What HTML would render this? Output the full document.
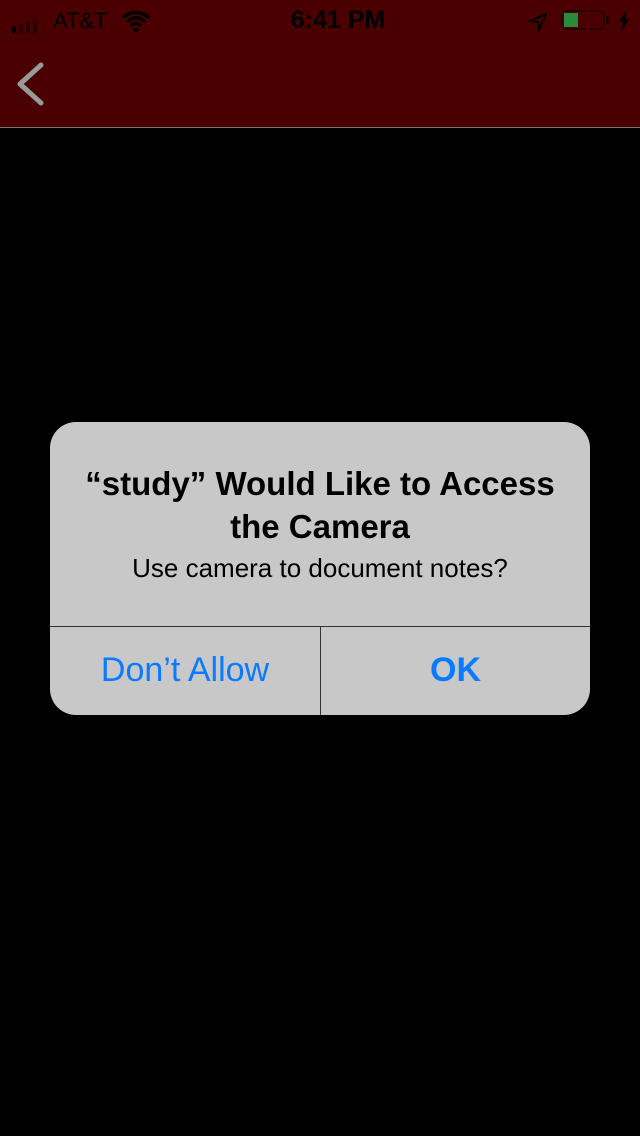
<!DOCTYPE html>
<html><head><style>
body{margin:0;width:640px;height:1136px;background:#000;position:relative;overflow:hidden;font-family:"Liberation Sans",sans-serif}
.nav{position:absolute;left:0;top:0;width:640px;height:127px;background:#4a0000;border-bottom:1px solid #777}
.st{position:absolute;top:8px;font-size:22px;color:#000}
.dlg{position:absolute;left:50px;top:422px;width:540px;height:293px;background:#c8c8c8;border-radius:26px;overflow:hidden}
.t{position:absolute;left:0;width:540px;text-align:center;color:#000}
.b{position:absolute;top:204px;height:89px;line-height:89px;text-align:center;color:#0a7aff;font-size:34px}
</style></head><body>
<div class="nav">
<div style="position:absolute;left:12px;top:22px">
<div style="position:absolute;left:0;top:4px;width:4px;height:7px;background:#000;border-radius:1px"></div>
<div style="position:absolute;left:7px;top:2px;width:4px;height:9px;background:#2a0000"></div>
<div style="position:absolute;left:14px;top:0;width:4px;height:11px;background:#2a0000" ></div>
<div style="position:absolute;left:21px;top:-3px;width:4px;height:14px;background:#2a0000"></div>
</div>
<div class="st" style="left:53px">AT&amp;T</div>
<svg style="position:absolute;left:121px;top:10px" width="30" height="22" viewBox="0 0 30 22"><path d="M2 8a18 18 0 0 1 26 0M6 12a12 12 0 0 1 18 0M10 16a6 6 0 0 1 10 0" stroke="#000" stroke-width="3.5" fill="none"/><circle cx="15" cy="20" r="2.5"/></svg>
<div class="st" style="left:277px;top:6px;font-size:25px;font-weight:bold;width:122px;text-align:center">6:41 PM</div>
<svg style="position:absolute;left:528px;top:12px" width="20" height="20" viewBox="0 0 20 20"><path d="M18 2L2 9l8 1 1 8z" fill="none" stroke="#000" stroke-width="2"/></svg>
<div style="position:absolute;left:561px;top:10px;width:44px;height:20px;border:2px solid #2a0000;border-radius:5px;box-sizing:border-box"></div>
<div style="position:absolute;left:564px;top:13px;width:14px;height:14px;background:#2a8a3a"></div>
<div style="position:absolute;left:606px;top:16px;width:3px;height:8px;background:#2a0000"></div>
<svg style="position:absolute;left:618px;top:10px" width="12" height="22" viewBox="0 0 12 22"><path d="M8 0L1 12h4l-2 10 8-13H7z" fill="#000"/></svg>
<svg style="position:absolute;left:14px;top:60px" width="34" height="48" viewBox="0 0 34 48"><path d="M27 5L6 24l21 19" stroke="#999" stroke-width="5" fill="none" stroke-linecap="round" stroke-linejoin="round"/></svg>
</div>
<div class="dlg">
<div class="t" style="top:40px;font-size:33px;line-height:43px;font-weight:bold">“study” Would Like to Access<br>the Camera</div>
<div class="t" style="top:131px;font-size:26px">Use camera to document notes?</div>
<div style="position:absolute;left:0;top:204px;width:540px;height:1px;background:#333"></div>
<div style="position:absolute;left:270px;top:204px;width:1px;height:89px;background:#333"></div>
<div class="b" style="left:0;width:270px">Don’t Allow</div>
<div class="b" style="left:271px;width:269px;font-weight:bold">OK</div>
</div>
</body></html>
